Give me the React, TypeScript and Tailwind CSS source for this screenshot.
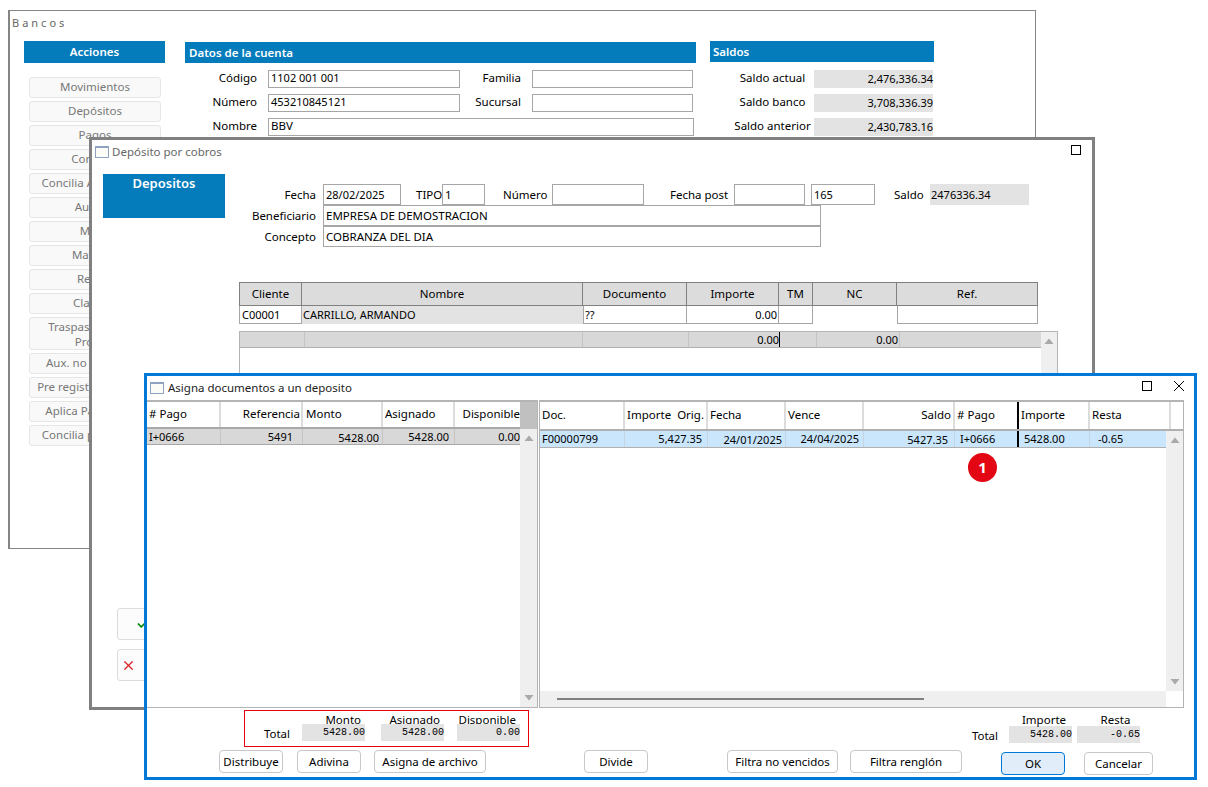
import React from 'react';
import { Check, X } from 'lucide-react';

const sideActions = [
  'Movimientos', 'Depósitos', 'Pagos', 'Consulta', 'Concilia Automática', 'Auxiliar', 'Mapa', 'Mayores',
  'Recibo', 'Clasifica', 'Traspaso cuentas\nPropias', 'Aux. no conciliado', 'Pre registro de pagos',
  'Aplica Pago previo', 'Concilia por archivo',
];

const Input: React.FC<{ className: string; children?: React.ReactNode }> = ({ className, children }) => (
  <div className={`border border-[#a6a6a6] bg-white pl-[2px] leading-[16px] flex items-center whitespace-nowrap text-black ${className}`}>
    {children}
  </div>
);

const Arrow: React.FC<{ down?: boolean }> = ({ down }) => (
  <svg width="10" height="7" viewBox="0 0 10 7" className="shrink-0">
    <polygon points={down ? '0.5,1 9.5,1 5,6.5' : '0.5,6 9.5,6 5,0.5'} fill="#a9a9a9" />
  </svg>
);

const WinIcon = () => <div className="w-[14px] h-[12px] shrink-0 border border-[#8fa2bf] border-t-2 bg-[#fbfbf8]" />;

const DialogButton: React.FC<{ className: string; children: React.ReactNode }> = ({ className, children }) => (
  <div className={`h-[23px] shrink-0 rounded-[4px] border border-[#c8c8c8] bg-white flex items-center justify-center whitespace-nowrap text-black ${className}`}>
    {children}
  </div>
);

const TotalBox: React.FC<{ label: string; value: string }> = ({ label, value }) => (
  <div className="w-[63px] shrink-0">
    <div className="h-[13px] overflow-hidden text-right pr-[4px] leading-[18px] whitespace-nowrap">{label}</div>
    <div className="h-[17px] bg-[#e3e3e3] text-right font-['Liberation_Mono'] text-[10px] leading-[17px] text-black">{value}</div>
  </div>
);

const BancosWindow = () => (
  <div className="absolute left-[8px] top-[10px] w-[1028px] h-[539px] border border-l-2 border-[#858585] bg-white">
    <div className="h-[30px] pl-[2px] pt-[3px] text-[11px] leading-[18px] tracking-[3px] text-[#666]">Bancos</div>
    <div className="flex pl-[14px]">
      <div className="w-[141px] shrink-0">
        <div className="h-[22px] bg-[#047cbc] text-white font-semibold text-center leading-[21px]">Acciones</div>
        <div className="mt-[14px] ml-[5px] w-[132px] flex flex-col gap-[3px]">
          {sideActions.map((a) => (
            <div
              key={a}
              className={`${a.startsWith('Traspaso') ? 'h-[33px] leading-[15px]' : 'h-[21px] pb-[2px]'} rounded-[3px] border border-[#e6e6e6] bg-[#f9f9f9] flex items-center justify-center text-center whitespace-pre-line text-[#777]`}
            >
              {a}
            </div>
          ))}
        </div>
      </div>
      <div className="ml-[20px] w-[511px] shrink-0 pt-[1px]">
        <div className="h-[21px] bg-[#047cbc] text-white font-semibold pl-[4px] leading-[21px]">Datos de la cuenta</div>
        <div className="mt-[7px] flex flex-col gap-[6px]">
          <div className="flex h-[18px] items-center">
            <div className="w-[72px] pb-[2px] text-right">Código</div>
            <Input className="ml-[11px] w-[192px] h-[18px] pb-[2px] text-[11px]">1102 001 001</Input>
            <div className="w-[61px] pb-[2px] text-right">Familia</div>
            <Input className="ml-[11px] w-[161px] h-[18px]" />
          </div>
          <div className="flex h-[18px] items-center">
            <div className="w-[72px] pb-[2px] text-right">Número</div>
            <Input className="ml-[11px] w-[192px] h-[18px] pb-[2px] text-[11px]">453210845121</Input>
            <div className="w-[61px] pb-[2px] text-right">Sucursal</div>
            <Input className="ml-[11px] w-[161px] h-[18px]" />
          </div>
          <div className="flex h-[18px] items-center">
            <div className="w-[72px] pb-[2px] text-right">Nombre</div>
            <Input className="ml-[11px] w-[426px] h-[18px] pb-[2px]">BBV</Input>
          </div>
        </div>
      </div>
      <div className="ml-[14px] w-[224px] shrink-0">
        <div className="h-[21px] bg-[#047cbc] text-white font-semibold pl-[3px] leading-[21px]">Saldos</div>
        <div className="mt-[8px] flex flex-col gap-[6px]">
          {[['Saldo actual', '2,476,336.34'], ['Saldo banco', '3,708,336.39'], ['Saldo anterior', '2,430,783.16']].map(([l, v]) => (
            <div key={l} className="flex h-[18px] items-center">
              <div className="w-[104px] pl-[21px] pb-[2px] text-center whitespace-nowrap">{l}</div>
              <div className="w-[119px] h-[18px] bg-[#e3e3e3] text-right text-[11px] leading-[17px]">{v}</div>
            </div>
          ))}
        </div>
      </div>
    </div>
  </div>
);

const depositHeaders: [string, string][] = [
  ['Cliente', 'w-[63px]'], ['Nombre', 'w-[281px]'], ['Documento', 'w-[104px]'], ['Importe', 'w-[92px]'],
  ['TM', 'w-[34px]'], ['NC', 'w-[84px]'], ['Ref.', 'w-[141px]'],
];

const DepositoWindow = () => (
  <div className="absolute left-[89px] top-[137px] w-[1006px] h-[573px] border-[3px] border-[#808080] bg-white">
    <div className="h-[34px] flex items-start pl-[3px] pt-[6px] pr-[11px]">
      <WinIcon />
      <span className="ml-[3px] leading-[12px] text-[#666]">Depósito por cobros</span>
      <div className="ml-auto mt-[-1px] w-[10px] h-[10px] border border-black" />
    </div>
    <div className="flex pl-[11px]">
      <div className="w-[122px] shrink-0">
        <div className="h-[44px] bg-[#047cbc] text-white font-semibold text-[13px] text-center leading-[18px]">Depositos</div>
        <div className="mt-[390px] ml-[14px] flex flex-col gap-[9px]">
          <div className="h-[32px] w-[80px] rounded-[3px] border border-[#dcdcdc] bg-[#fcfcfc] flex items-center pl-[18px]">
            <Check size={14} strokeWidth={3} className="text-[#0a8a0a]" />
          </div>
          <div className="h-[32px] w-[80px] rounded-[3px] border border-[#dcdcdc] bg-[#fcfcfc] flex items-center pl-[3px]">
            <X size={15} strokeWidth={2} className="text-[#d8232a]" />
          </div>
        </div>
      </div>
      <div className="ml-[14px] flex-1 pt-[10px]">
        <div className="flex h-[21px] items-center whitespace-nowrap">
          <div className="w-[77px] text-right">Fecha</div>
          <Input className="ml-[7px] w-[78px] h-[21px] text-[11px]">28/02/2025</Input>
          <div className="ml-[15px] w-[26px]">TIPO</div>
          <Input className="w-[43px] h-[21px]">1</Input>
          <div className="ml-[18px] w-[45px]">Número</div>
          <Input className="ml-[4px] w-[92px] h-[21px]" />
          <div className="ml-[26px] w-[57px]">Fecha post</div>
          <Input className="ml-[7px] w-[71px] h-[21px]" />
          <Input className="ml-[6px] w-[64px] h-[21px] text-[11px]">165</Input>
          <div className="ml-[19px] w-[28px]">Saldo</div>
          <div className="ml-[8px] w-[99px] h-[21px] bg-[#e3e3e3] pl-[1px] text-[11px] leading-[21px]">2476336.34</div>
        </div>
        <div className="flex h-[21px] items-center">
          <div className="w-[77px] text-right">Beneficiario</div>
          <Input className="ml-[7px] w-[498px] h-[21px]">EMPRESA DE DEMOSTRACION</Input>
        </div>
        <div className="flex h-[21px] items-center">
          <div className="w-[77px] text-right">Concepto</div>
          <Input className="ml-[7px] w-[498px] h-[21px]">COBRANZA DEL DIA</Input>
        </div>

        <div className="mt-[35px] flex h-[24px] w-[799px]">
          {depositHeaders.map(([h, w]) => (
            <div key={h} className={`${w} border-y border-r first:border-l border-[#808080] bg-[#dcdcdc] text-center leading-[22px]`}>{h}</div>
          ))}
        </div>
        <div className="flex h-[18px] w-[799px] text-[11px] leading-[17px]">
          <div className="w-[63px] border-x border-b border-[#a6a6a6] pl-[2px]">C00001</div>
          <div className="w-[281px] bg-[#e3e3e3] pl-[1px]">CARRILLO, ARMANDO</div>
          <div className="w-[104px] border-x border-b border-[#a6a6a6] pl-[1px]">??</div>
          <div className="w-[92px] border-r border-b border-[#a6a6a6] pr-[1px] text-right">0.00</div>
          <div className="w-[34px] border-r border-b border-[#a6a6a6]" />
          <div className="w-[84px]" />
          <div className="w-[141px] border-x border-b border-[#a6a6a6]" />
        </div>

        <div className="mt-[7px] flex h-[60px] w-[819px] border-t border-x border-[#b4b4b4] text-[11px]">
          <div className="flex w-[801px] h-[16px] border-b border-[#b0b0b0] bg-[#d8d8d8] leading-[15px]">
            <div className="w-[65px] border-r border-[#c4c4c4]" />
            <div className="w-[278px] border-r border-[#c4c4c4]" />
            <div className="w-[106px] border-r border-[#c4c4c4]" />
            <div className="w-[91px] border-r border-black text-right">0.00</div>
            <div className="w-[37px] border-r border-[#c4c4c4]" />
            <div className="w-[83px] border-r border-[#c4c4c4] text-right pr-[1px]">0.00</div>
            <div className="flex-1" />
          </div>
          <div className="flex-1 bg-[#efefef] flex justify-center pt-[6px]"><Arrow /></div>
        </div>
      </div>
    </div>
  </div>
);

const leftCols: [string, string, string, string][] = [
  ['# Pago', 'I+0666', 'w-[74px] pl-[2px]', 'text-left'],
  ['Referencia', '5491', 'w-[82px] pr-[1px]', 'text-right pr-[9px]'],
  ['Monto', '5428.00', 'w-[80px] pl-[3px]', 'text-right pr-[3px] pt-px'],
  ['Asignado', '5428.00', 'w-[72px] pl-[2px]', 'text-right pr-[5px]'],
  ['Disponible', '0.00', 'w-[65px]', 'text-right'],
];

const rightCols: [string, string, string, string][] = [
  ['Doc.', 'F00000799', 'w-[85px] pl-[2px]', 'pl-[2px]'],
  ['Importe\u00a0 Orig.', '5,427.35', 'w-[83px] text-right pr-[2px]', 'text-right pr-[5px]'],
  ['Fecha', '24/01/2025', 'w-[78px] pl-[2px]', 'text-right pr-[3px] pt-px'],
  ['Vence', '24/04/2025', 'w-[78px] pl-[2px]', 'text-right pr-[4px]'],
  ['Saldo', '5427.35', 'w-[91px] text-right pr-[2px]', 'text-right pr-[6px] pt-px'],
  ['# Pago', 'I+0666', 'w-[64px] pl-[2px]', 'pl-[5px]'],
  ['Importe', '5428.00', 'w-[71px] pl-[2px]', 'pl-[5px]'],
  ['Resta', '-0.65', 'w-[81px] pl-[2px]', 'pl-[8px]'],
];

const AsignaWindow = () => (
  <div className="absolute left-[144px] top-[373px] w-[1053px] h-[407px] border-[3px] border-[#0078d7] bg-white flex flex-col">
    <div className="h-[24px] shrink-0 flex items-start pl-[3px] pt-[6px] pr-[10px]">
      <WinIcon />
      <span className="ml-[4px] leading-[12px] text-[#222]">Asigna documentos a un deposito</span>
      <div className="ml-auto mt-[-1px] w-[10px] h-[10px] border border-black" />
      <svg width="10" height="10" viewBox="0 0 10 10" className="ml-[22px] mt-[-1px]">
        <path d="M0 0L10 10M10 0L0 10" stroke="#000" strokeWidth="1" fill="none" />
      </svg>
    </div>

    <div className="flex h-[308px] shrink-0">
      {/* pagos */}
      <div className="w-[391px] shrink-0 flex border-t-2 border-r border-b border-t-[#b4b4b4] border-r-[#b4b4b4] border-b-[#b4b4b4]">
        <div className="w-[373px] shrink-0">
          <div className="flex h-[27px] border-b-2 border-[#a8a8a8]">
            {leftCols.map(([h, , w]) => (
              <div key={h} className={`${w} ${h === 'Referencia' || h === 'Disponible' ? 'text-right' : ''} border-r-2 border-[#dcdcdc] last:border-r-0 leading-[24px] whitespace-nowrap text-black`}>{h}</div>
            ))}
          </div>
          <div className="flex h-[16px] border-b border-[#a8a8a8] bg-[#d8d8d8] text-[11px] leading-[15px]">
            {leftCols.map(([h, v, w, cell]) => (
              <div key={h} className={`${w.split(' ')[0]} ${cell} ${h === '# Pago' ? 'pl-[2px]' : ''} border-r border-[#c4c4c4] last:border-r-0 whitespace-nowrap overflow-hidden`}>{v}</div>
            ))}
          </div>
        </div>
        <div className="flex-1 flex flex-col">
          <div className="h-[27px] bg-[#c0c0c0]" />
          <div className="flex-1 bg-[#efefef] flex flex-col items-center justify-between py-[6px]">
            <Arrow />
            <Arrow down />
          </div>
        </div>
      </div>

      {/* documentos */}
      <div className="ml-[1px] w-[645px] shrink-0 flex flex-col border-t-2 border-x border-b border-[#b4b4b4]">
        <div className="flex h-[29px] shrink-0 border-b-2 border-[#b0b0b0]">
          {rightCols.map(([h, , w]) => (
            <div key={h + w} className={`${w} ${h === '# Pago' ? 'border-r-2 border-black' : 'border-r-2 border-[#dcdcdc]'} leading-[25px] whitespace-nowrap`}>{h}</div>
          ))}
          <div className="flex-1" />
        </div>
        <div className="flex-1 flex min-h-0">
          <div className="flex-1 relative">
            <div className="flex h-[17px] border-b border-[#b0b0b0] bg-[#c9e6fc] text-[11px] leading-[15px]">
              {rightCols.map(([h, v, w, cell]) => (
                <div key={h + v} className={`${h === 'Resta' ? 'flex-1' : w.split(' ')[0]} ${cell} ${h === '# Pago' ? 'border-r-2 border-black' : 'border-r border-[#c4d4e0]'} last:border-r-0 whitespace-nowrap`}>{v}</div>
              ))}
            </div>
            <div className="absolute left-[428px] top-[22px] w-[29px] h-[29px] rounded-full bg-[#e30613] text-white font-bold text-[15px] flex items-center justify-center">1</div>
          </div>
          <div className="w-[17px] shrink-0 bg-[#efefef] flex flex-col items-center justify-between py-[6px]">
            <Arrow />
            <Arrow down />
          </div>
        </div>
        <div className="h-[16px] shrink-0 flex">
          <div className="flex-1 bg-[#efefef] pl-[17px] pt-[7px]">
            <div className="w-[367px] h-[2px] bg-[#808080]" />
          </div>
          <div className="w-[17px] bg-white" />
        </div>
      </div>
    </div>

    {/* totales */}
    <div className="flex-1">
      <div className="flex h-[42px]">
        <div className="ml-[97px] mt-[2px] w-[285px] h-[37px] border border-[#e8000d] flex">
          <div className="w-[57px] shrink-0 pt-[15px] pr-[12px] text-right leading-[16px]">Total</div>
          <TotalBox label="Monto" value="5428.00" />
          <div className="w-[16px]" />
          <TotalBox label="Asignado" value="5428.00" />
          <div className="w-[13px]" />
          <TotalBox label="Disponible" value="0.00" />
        </div>
        <div className="ml-[440px] mt-[5px] flex">
          <div className="w-[29px] pt-[14px] text-right leading-[18px]">Total</div>
          <div className="w-[63px] ml-[11px] text-center">
            <div className="h-[13px] leading-[13px] pl-[7px]">Importe</div>
            <div className="h-[17px] bg-[#e3e3e3] text-right font-['Liberation_Mono'] text-[10px] leading-[17px]">5428.00</div>
          </div>
          <div className="w-[63px] ml-[5px] text-center">
            <div className="h-[13px] leading-[13px] pl-[14px]">Resta</div>
            <div className="h-[17px] bg-[#e3e3e3] text-right font-['Liberation_Mono'] text-[10px] leading-[17px]">-0.65</div>
          </div>
        </div>
      </div>
      <div className="flex items-start pl-[72px]">
        <DialogButton className="w-[64px]">Distribuye</DialogButton>
        <DialogButton className="ml-[14px] w-[64px]">Adivina</DialogButton>
        <DialogButton className="ml-[13px] w-[112px]">Asigna de archivo</DialogButton>
        <DialogButton className="ml-[98px] w-[64px]">Divide</DialogButton>
        <DialogButton className="ml-[79px] w-[111px]">Filtra no vencidos</DialogButton>
        <DialogButton className="ml-[12px] w-[112px]">Filtra renglón</DialogButton>
        <DialogButton className="ml-[39px] mt-[2px] w-[64px] !border-[#0078d7] !bg-[#e1eef9]">OK</DialogButton>
        <DialogButton className="ml-[19px] mt-[2px] w-[69px]">Cancelar</DialogButton>
      </div>
    </div>
  </div>
);

export default function App() {
  return (
    <div className="relative w-[1208px] h-[787px] overflow-hidden bg-white font-['Noto_Sans',sans-serif] text-[11.5px] text-black">
      <BancosWindow />
      <DepositoWindow />
      <AsignaWindow />
    </div>
  );
}
